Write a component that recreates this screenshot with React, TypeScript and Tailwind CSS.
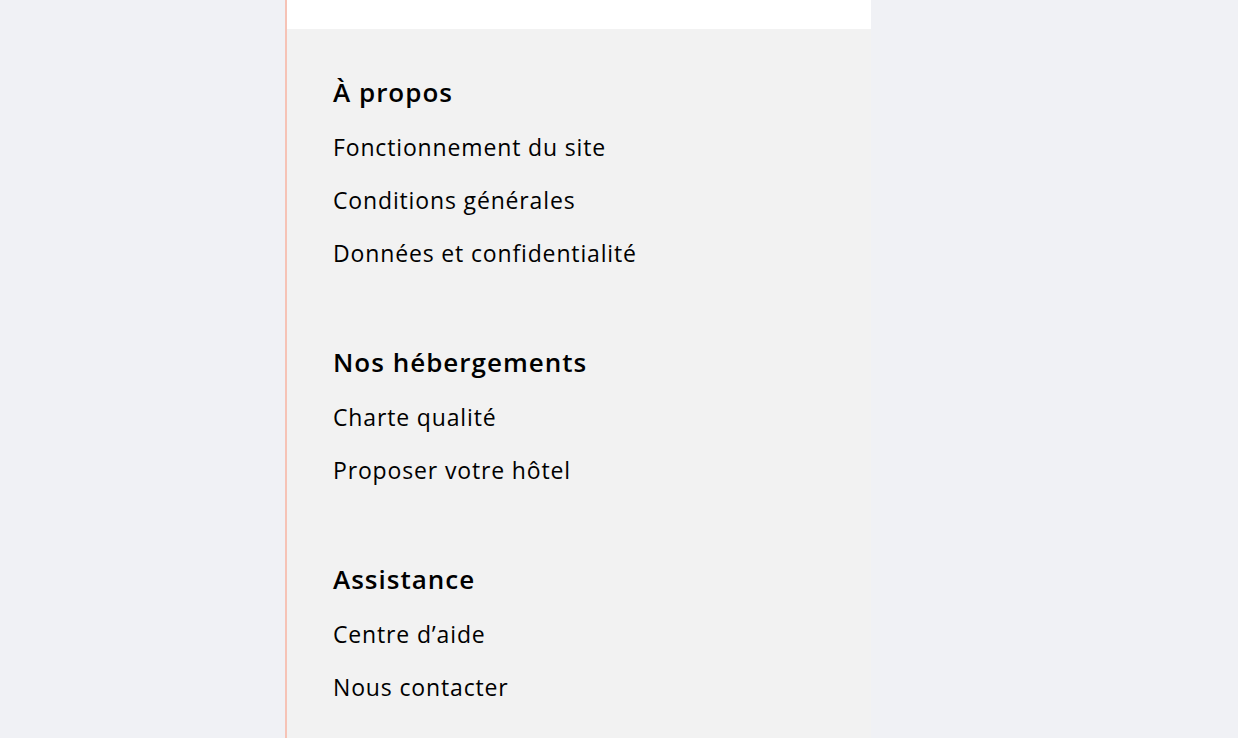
import React from "react";

const sections = [
  {
    title: "À propos",
    links: ["Fonctionnement du site", "Conditions générales", "Données et confidentialité"],
  },
  {
    title: "Nos hébergements",
    links: ["Charte qualité", "Proposer votre hôtel"],
  },
  {
    title: "Assistance",
    links: ["Centre d’aide", "Nous contacter"],
  },
];

function FooterSection(props: any) {
  return (
    <div className="flex flex-col">
      <h3 className="h-[55px] flex items-center text-[26px] font-semibold tracking-[1px] text-black">{props.title}</h3>
      {props.links.map((link: string) => (
        <a key={link} href="#" className="h-[53px] pt-[2px] flex items-center text-[23px] font-normal tracking-[0.85px] text-black">
          {link}
        </a>
      ))}
    </div>
  );
}

export default function App() {
  return (
    <div className="h-screen overflow-hidden bg-[#f0f1f5] font-['Open_Sans','Liberation_Sans',sans-serif]">
      <div className="ml-[285px] w-[586px] h-full border-l-2 border-[#f6c3b6] flex flex-col">
        <div className="h-[29px] bg-white shrink-0"></div>
        <div className="flex-1 bg-[#f2f2f2] pl-[46px] pt-[36px] flex flex-col gap-[56px]">
          {sections.map((s) => (
            <FooterSection key={s.title} title={s.title} links={s.links} />
          ))}
        </div>
      </div>
    </div>
  );
}
